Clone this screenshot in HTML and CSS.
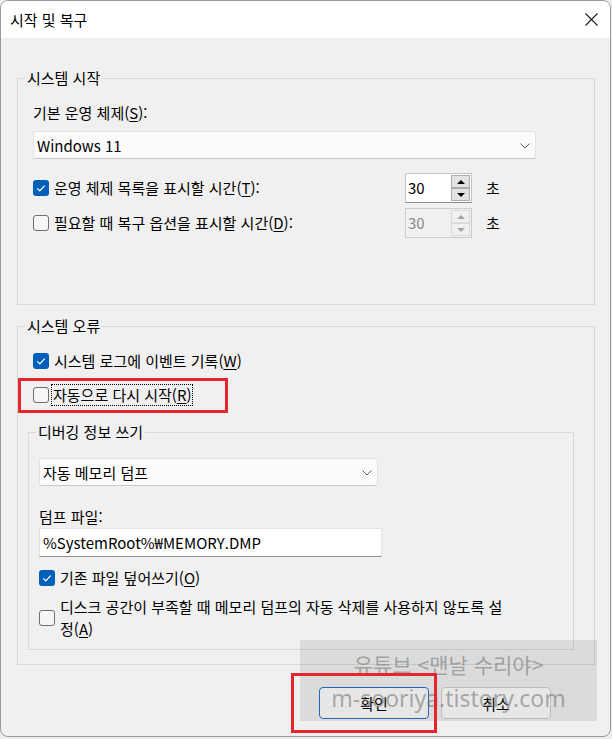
FILE: index.html
```html
<!DOCTYPE html>
<html lang="ko">
<head>
<meta charset="utf-8">
<title>시작 및 복구</title>
<link rel="stylesheet" href="styles.css">
</head>
<body>
<div class="window">
  <div class="titlebar">
    <span class="title">시작 및 복구</span>
    <span class="close"><svg width="13" height="13" viewBox="0 0 13 13"><path d="M0.5 0.5L12.5 12.5M12.5 0.5L0.5 12.5" stroke="#1b1b1b" stroke-width="1.1" fill="none"/></svg></span>
  </div>
  <div class="content">
    <fieldset class="group g1">
      <legend>시스템 시작</legend>
      <div class="gbody g1body">
        <div class="label">기본 운영 체제(<u>S</u>):</div>
        <div class="combo combo-os"><span>Windows 11</span><svg class="chev" width="10" height="6" viewBox="0 0 10 6"><path d="M0.5 0.5L5 5L9.5 0.5" stroke="#5c5c5c" stroke-width="1" fill="none"/></svg></div>
        <div class="row timed r1">
          <div class="check">
            <span class="box checked"><svg width="16" height="16" viewBox="0 0 16 16"><path d="M4.3 8.4L6.8 10.9L11.7 5.6" stroke="#fff" stroke-width="1.3" fill="none"/></svg></span>
            <span class="text">운영 체제 목록을 표시할 시간(<u>T</u>):</span>
          </div>
          <div class="spin">
            <span class="val">30</span>
            <span class="btns"><span class="sb"><i class="tri up"></i></span><span class="sb"><i class="tri down"></i></span></span>
          </div>
          <span class="unit">초</span>
        </div>
        <div class="row timed r2">
          <div class="check">
            <span class="box"></span>
            <span class="text">필요할 때 복구 옵션을 표시할 시간(<u>D</u>):</span>
          </div>
          <div class="spin disabled">
            <span class="val">30</span>
            <span class="btns"><span class="sb"><i class="tri up"></i></span><span class="sb"><i class="tri down"></i></span></span>
          </div>
          <span class="unit">초</span>
        </div>
      </div>
    </fieldset>

    <fieldset class="group g2">
      <legend>시스템 오류</legend>
      <div class="gbody g2body">
        <div class="row r3">
          <div class="check">
            <span class="box checked"><svg width="16" height="16" viewBox="0 0 16 16"><path d="M4.3 8.4L6.8 10.9L11.7 5.6" stroke="#fff" stroke-width="1.3" fill="none"/></svg></span>
            <span class="text">시스템 로그에 이벤트 기록(<u>W</u>)</span>
          </div>
        </div>
        <div class="row r4">
          <div class="check">
            <span class="box"></span>
            <span class="text focus">자동으로 다시 시작(<u>R</u>)</span>
          </div>
        </div>

        <fieldset class="group g3">
          <legend>디버깅 정보 쓰기</legend>
          <div class="gbody g3body">
            <div class="combo combo-dump"><span>자동 메모리 덤프</span><svg class="chev" width="10" height="6" viewBox="0 0 10 6"><path d="M0.5 0.5L5 5L9.5 0.5" stroke="#5c5c5c" stroke-width="1" fill="none"/></svg></div>
            <div class="label l-file">덤프 파일:</div>
            <div class="input">%SystemRoot%₩MEMORY.DMP</div>
            <div class="row r5">
              <div class="check">
                <span class="box checked"><svg width="16" height="16" viewBox="0 0 16 16"><path d="M4.3 8.4L6.8 10.9L11.7 5.6" stroke="#fff" stroke-width="1.3" fill="none"/></svg></span>
                <span class="text">기존 파일 덮어쓰기(<u>O</u>)</span>
              </div>
            </div>
            <div class="row r6">
              <div class="check multi">
                <span class="box"></span>
                <span class="text">디스크 공간이 부족할 때 메모리 덤프의 자동 삭제를 사용하지 않도록 설<br>정(<u>A</u>)</span>
              </div>
            </div>
          </div>
        </fieldset>
      </div>
    </fieldset>

    <div class="buttons">
      <button class="btn primary">확인</button>
      <button class="btn">취소</button>
    </div>
  </div>

  <div class="watermark">
    <span class="wm1">유튜브 &lt;맨날 수리야&gt;</span>
    <span class="wm2">m-sooriya.tistory.com</span>
  </div>
  <div class="redbox rb1"></div>
  <div class="redbox rb2"></div>
</div>
</body>
</html>
```

FILE: styles.css
```css
* { box-sizing: border-box; }
html, body { margin: 0; padding: 0; }
body {
  width: 612px;
  height: 739px;
  overflow: hidden;
  background: #ececec;
  font-family: "Noto Sans CJK KR", "Noto Sans", sans-serif;
  font-size: 15px;
  color: #000;
}
.window {
  position: relative;
  width: 611px;
  height: 737px;
  background: #f0f0f0;
  border: 1px solid #9a9a9a;
  border-radius: 8px;
  overflow: hidden;
  display: flex;
  flex-direction: column;
}
.titlebar {
  flex: none;
  height: 37px;
  background: #fff;
  display: flex;
  align-items: center;
  justify-content: space-between;
  padding: 0 12px 0 9px;
}
.title { line-height: 20px; }
.close { display: flex; width: 13px; height: 13px; }

.content {
  flex: 1;
  padding: 30px 15px 17px 16px;
}
.group {
  margin: 0;
  padding: 0;
  border: 1px solid #d9d9d9;
  min-width: 0;
}
.group legend {
  margin-left: 7px;
  padding: 0 2px;
  height: 20px;
  line-height: 20px;
}
.g1body { padding: 15px 15px 66px 15px; }
.g2 { margin-top: 11px; }
.g2body { padding: 15px 20px 14px 10px; }
.g3 { margin-top: 17px; }
.g3body { padding: 16px 10px 9px 10px; }

.label { line-height: 20px; height: 20px; }
.l-file { margin-top: 21px; }

.combo {
  display: flex;
  align-items: center;
  justify-content: space-between;
  height: 28px;
  padding: 0 5px 0 3px;
  background: #fbfbfb;
  border: 1px solid #e3e3e3;
  border-bottom-color: #c9c9c9;
  border-radius: 3px;
}
.combo-os { margin-top: 8px; width: 503px; }
.combo-dump { width: 339px; }
.chev { margin-top: 1px; }

.input {
  margin-top: 1px;
  width: 343px;
  height: 29px;
  padding: 0 3px;
  line-height: 27px;
  background: #fff;
  border: 1px solid #e3e3e3;
  border-bottom-color: #8f8f8f;
}

.row { display: flex; align-items: center; }
.g2body > .row { padding-left: 5px; }
.timed { height: 30px; }
.r1 { margin-top: 14px; }
.r2 { margin-top: 5px; }
.r3 { height: 20px; }
.r4 { margin-top: 14px; height: 20px; }
.r5 { margin-top: 11px; height: 20px; }
.r6 { margin-top: 8px; }

.check { display: flex; align-items: center; gap: 5px; line-height: 20px; }
.timed .check { width: 372px; }
.check.multi .text { line-height: 22px; }
.box {
  flex: none;
  width: 16px;
  height: 16px;
  border-radius: 3px;
  border: 1px solid #6f6f6f;
  background: #f6f6f6;
}
.box svg { display: block; }
.box.checked {
  border: none;
  background: #005fb8;
}
.text.focus {
  margin-left: -2px;
  padding: 0 1px;
  outline: 1px dotted #000;
  outline-offset: 0;
}
u { text-underline-offset: 2px; }

.spin {
  display: flex;
  align-items: stretch;
  width: 67px;
  height: 30px;
  background: #fff;
  border: 1px solid #c4c4c4;
  border-bottom-color: #8c8c8c;
}
.spin .val {
  flex: 1;
  padding-left: 2px;
  line-height: 28px;
}
.btns {
  display: flex;
  flex-direction: column;
  gap: 0;
  width: 20px;
  padding: 1px 1px 1px 0;
}
.sb {
  flex: 1;
  display: flex;
  align-items: center;
  justify-content: center;
  background: #e3e3e3;
  border: 1px solid #adadad;
}
.tri { display: block; width: 0; height: 0; border-left: 4px solid transparent; border-right: 4px solid transparent; }
.tri.up { border-bottom: 4px solid #000; }
.tri.down { border-top: 4px solid #000; }
.spin.disabled { background: #f0f0f0; border-color: #cccccc; }
.spin.disabled .val { color: #8a8a8a; }
.spin.disabled .sb { background: #f0f0f0; border-color: #dadada; }
.spin.disabled .tri.up { border-bottom-color: #a3a3a3; }
.spin.disabled .tri.down { border-top-color: #a3a3a3; }
.unit { margin-left: 14px; line-height: 20px; }

.buttons {
  display: flex;
  justify-content: flex-end;
  gap: 12px;
  margin-top: 22px;
  padding-right: 44px;
}
.btn {
  width: 110px;
  height: 32px;
  font-family: inherit;
  font-size: 15px;
  color: #000;
  background: #fdfdfd;
  border: 1px solid #cfcfcf;
  border-radius: 4px;
  padding: 0;
}
.btn.primary { border-color: #2a6fc0; }

.watermark {
  position: absolute;
  left: 299px;
  top: 639px;
  width: 297px;
  height: 81px;
  background: rgba(0, 0, 0, 0.085);
  display: flex;
  flex-direction: column;
  align-items: center;
  color: rgba(110, 110, 110, 0.55);
}
.wm1 { margin-top: 10px; font-size: 21px; line-height: 28px; }
.wm2 { margin-top: 4px; font-size: 23px; line-height: 32px; font-family: "Noto Sans", sans-serif; }

.redbox {
  position: absolute;
  border: 3px solid #e8242c;
}
.rb1 { left: 17px; top: 377px; width: 210px; height: 35px; }
.rb2 { left: 290px; top: 672px; width: 146px; height: 60px; }
```
